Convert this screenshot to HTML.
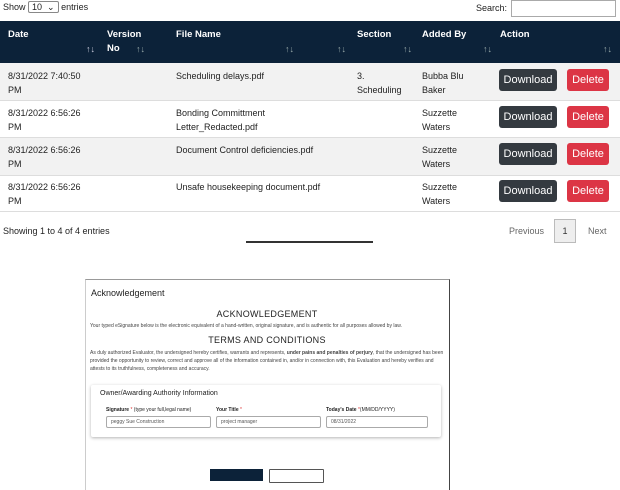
<!DOCTYPE html>
<html><head><style>
body{margin:0;width:620px;height:478px;background:#fff;font-family:"Liberation Sans",sans-serif;font-size:9px;color:#222;position:relative;overflow:hidden}
.a{position:absolute}
.hd{background:#0c2239;color:#fff;font-weight:bold}
.h{color:#fff;font-weight:bold;font-size:9.5px;line-height:14px}
.r{line-height:14px}
.btn{position:absolute;border-radius:3px;color:#fff;font-size:11px;text-align:center;line-height:22px;height:22px}
.dl{background:#343a40;width:58px;left:499px}
.de{background:#dc3545;width:42px;left:567px}
.s{color:#9aa;font-size:9px}
</style></head><body>
<div class="a" style="left:3px;top:2px">Show <span style="border:1px solid #888;padding:0 3px;border-radius:2px">10 &nbsp;⌄</span> entries</div>
<div class="a" style="left:476px;top:3px">Search:</div>
<div class="a" style="left:511px;top:0;width:103px;height:15px;border:1px solid #aaa"></div>
<div class="a hd" style="left:0;top:21px;width:620px;height:42px"></div>
<div class="a h" style="left:8px;top:28px">Date</div>
<div class="a h" style="left:107px;top:28px">Version<br>No</div>
<div class="a h" style="left:176px;top:28px">File Name</div>
<div class="a h" style="left:357px;top:28px">Section</div>
<div class="a h" style="left:422px;top:28px">Added By</div>
<div class="a h" style="left:500px;top:28px">Action</div>
<div class="a s" style="left:86px;top:44px;color:#ccd">↑↓</div><div class="a s" style="left:136px;top:44px">↑↓</div><div class="a s" style="left:285px;top:44px">↑↓</div><div class="a s" style="left:337px;top:44px">↑↓</div><div class="a s" style="left:403px;top:44px">↑↓</div><div class="a s" style="left:483px;top:44px">↑↓</div><div class="a s" style="left:603px;top:44px">↑↓</div>
<div class="a" style="left:0;top:63px;width:620px;height:37px;background:#f2f2f2;border-bottom:1px solid #ddd"></div>
<div class="a" style="left:0;top:137px;width:620px;height:37px;background:#f2f2f2;border-top:1px solid #ddd;border-bottom:1px solid #ddd"></div>
<div class="a" style="left:0;top:211px;width:620px;border-top:1px solid #ddd"></div>
<div class="a r" style="left:8px;top:69px">8/31/2022 7:40:50<br>PM</div>
<div class="a r" style="left:176px;top:69px">Scheduling delays.pdf</div>
<div class="a r" style="left:357px;top:69px">3.<br>Scheduling</div>
<div class="a r" style="left:422px;top:69px">Bubba Blu<br>Baker</div>
<div class="btn dl" style="top:69px">Download</div><div class="btn de" style="top:69px">Delete</div>
<div class="a r" style="left:8px;top:106px">8/31/2022 6:56:26<br>PM</div>
<div class="a r" style="left:176px;top:106px">Bonding Committment<br>Letter_Redacted.pdf</div>
<div class="a r" style="left:422px;top:106px">Suzzette<br>Waters</div>
<div class="btn dl" style="top:106px">Download</div><div class="btn de" style="top:106px">Delete</div>
<div class="a r" style="left:8px;top:143px">8/31/2022 6:56:26<br>PM</div>
<div class="a r" style="left:176px;top:143px">Document Control deficiencies.pdf</div>
<div class="a r" style="left:422px;top:143px">Suzzette<br>Waters</div>
<div class="btn dl" style="top:143px">Download</div><div class="btn de" style="top:143px">Delete</div>
<div class="a r" style="left:8px;top:180px">8/31/2022 6:56:26<br>PM</div>
<div class="a r" style="left:176px;top:180px">Unsafe housekeeping document.pdf</div>
<div class="a r" style="left:422px;top:180px">Suzzette<br>Waters</div>
<div class="btn dl" style="top:180px">Download</div><div class="btn de" style="top:180px">Delete</div>
<div class="a" style="left:3px;top:226px">Showing 1 to 4 of 4 entries</div>
<div class="a" style="left:509px;top:226px;color:#666">Previous</div>
<div class="a" style="left:554px;top:219px;width:20px;height:22px;border:1px solid #bbb;background:#eee;text-align:center;line-height:22px;color:#333">1</div>
<div class="a" style="left:588px;top:226px;color:#666">Next</div>
<div class="a" style="left:246px;top:241px;width:127px;height:2px;background:#333"></div>
<div class="a" style="left:85px;top:279px;width:363px;height:210px;border-top:1px solid #999;border-left:1px solid #ccc;border-right:1px solid #444"></div>
<div class="a" style="left:91px;top:288px;font-size:9px">Acknowledgement</div>
<div class="a" style="left:86px;top:309px;width:362px;text-align:center;font-size:9px;letter-spacing:.3px">ACKNOWLEDGEMENT</div>
<div class="a" style="left:90px;top:323px;font-size:5px;color:#444">Your typed eSignature below is the electronic equivalent of a hand-written, original signature, and is authentic for all purposes allowed by law.</div>
<div class="a" style="left:86px;top:335px;width:362px;text-align:center;font-size:9px;letter-spacing:.3px">TERMS AND CONDITIONS</div>
<div class="a" style="left:90px;top:349px;width:358px;font-size:5px;line-height:8px;color:#444">As duly authorized Evaluator, the undersigned hereby certifies, warrants and represents, <b>under pains and penalties of perjury</b>, that the undersigned has been provided the opportunity to review, correct and approve all of the information contained in, and/or in connection with, this Evaluation and hereby verifies and attests to its truthfulness, completeness and accuracy.</div>
<div class="a" style="left:91px;top:385px;width:350px;height:52px;box-shadow:0 1px 3px rgba(0,0,0,.3);border-radius:2px"></div>
<div class="a" style="left:100px;top:390px;font-size:7px">Owner/Awarding Authority Information</div>
<div class="a" style="left:106px;top:407px;font-size:5px"><b>Signature</b> <span style="color:#d33">*</span> (type your full,legal name)</div>
<div class="a" style="left:216px;top:407px;font-size:5px"><b>Your Title</b> <span style="color:#d33">*</span></div>
<div class="a" style="left:326px;top:407px;font-size:5px"><b>Today's Date</b> <span style="color:#d33">*</span>(MM/DD/YYYY)</div>
<div class="a" style="left:106px;top:416px;width:99px;height:10px;border:1px solid #aaa;border-radius:2px;font-size:5px;line-height:10px;padding-left:4px;color:#555">peggy Sue Construction</div>
<div class="a" style="left:216px;top:416px;width:99px;height:10px;border:1px solid #aaa;border-radius:2px;font-size:5px;line-height:10px;padding-left:4px;color:#555">project manager</div>
<div class="a" style="left:326px;top:416px;width:96px;height:10px;border:1px solid #aaa;border-radius:2px;font-size:5px;line-height:10px;padding-left:4px;color:#555">08/31/2022</div>
<div class="a" style="left:210px;top:469px;width:53px;height:12px;background:#0c2239"></div>
<div class="a" style="left:269px;top:469px;width:53px;height:12px;border:1px solid #555;border-radius:1px"></div>
</body></html>
